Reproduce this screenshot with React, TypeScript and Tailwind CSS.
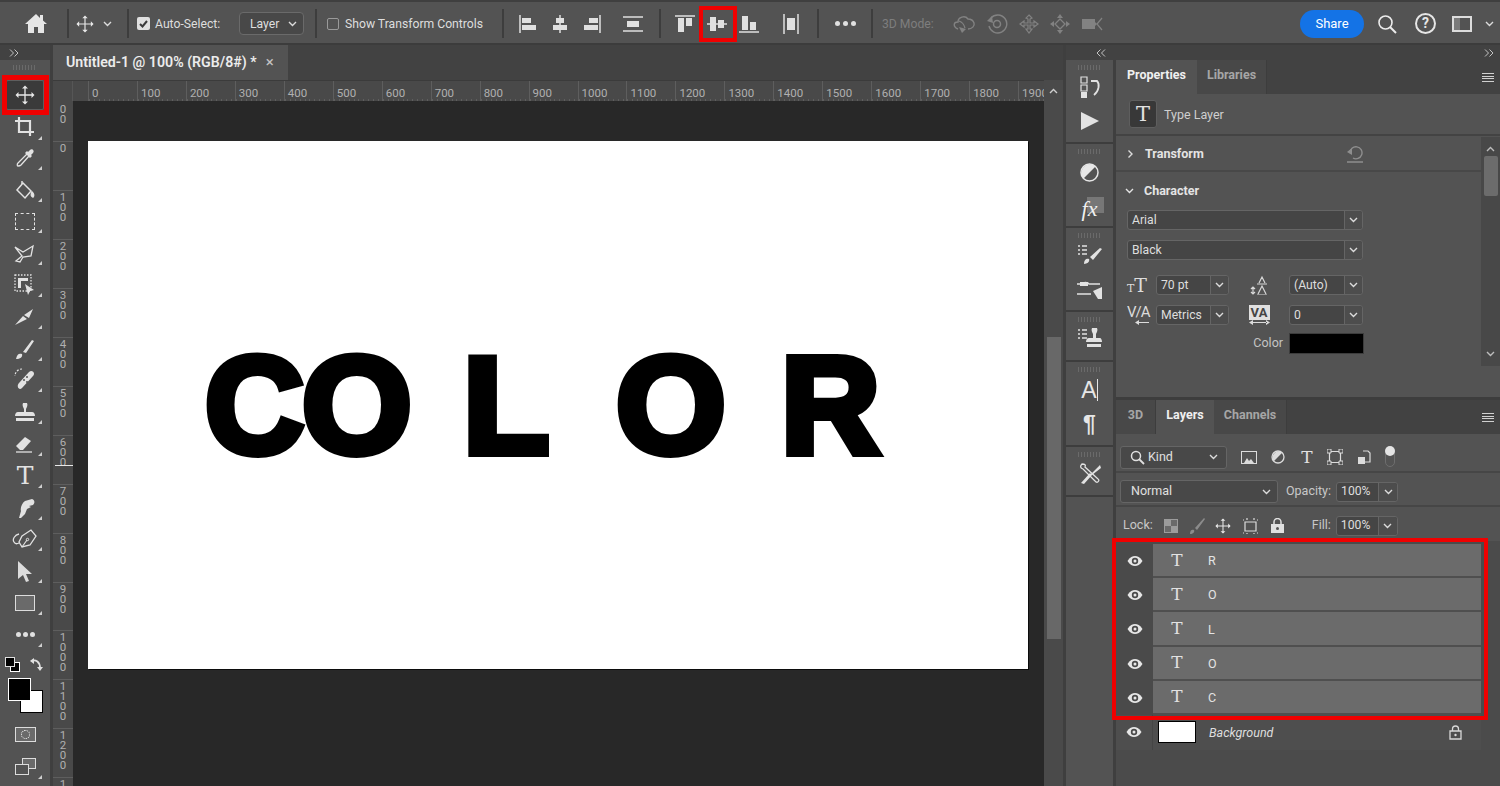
import React from 'react';

const Ico = ({ w = 20, h = 20, vb, children, className = 'text-[#e2e2e2]' }: { w?: number; h?: number; vb?: string; children: React.ReactNode; className?: string }) => (
  <svg width={w} height={h} viewBox={vb ?? `0 0 ${w} ${h}`} fill="none" stroke="currentColor" strokeWidth="1.5" className={className}>
    {children}
  </svg>
);

const Chevron = ({ className = 'text-[#dcdcdc]' }: { className?: string }) => (
  <svg width="9" height="6" viewBox="0 0 9 6" fill="none" stroke="currentColor" strokeWidth="1.4" className={className}>
    <path d="M1 1l3.5 3.5L8 1" />
  </svg>
);

const DoubleChevron = ({ className = '' }: { className?: string }) => (
  <svg width="10" height="8" viewBox="0 0 10 8" fill="none" stroke="#c4c4c4" strokeWidth="1" className={className}>
    <path d="M1 .5L4.500 4 1 7.500M5.500 .5L9 4 5.500 7.500" />
  </svg>
);

const MoveIcon = ({ s = 20 }: { s?: number }) => (
  <Ico w={s} h={s} vb="0 0 20 20" className="text-[#e8e8e8]">
    <path d="M10 2v16M2 10h16" strokeWidth="1.3" />
    <path d="M10 .5l3 3H7zM10 19.500l3-3H7zM.5 10l3-3v6zM19.500 10l-3-3v6z" fill="currentColor" stroke="none" />
  </Ico>
);

const TIcon = ({ size = 'text-[21px]' }: { size?: string }) => (
  <span className={`font-['DejaVu_Serif',serif] ${size} leading-none text-[#e2e2e2]`}>T</span>
);

const Eye = () => (
  <svg width="16" height="12" viewBox="0 0 16 12" className="text-[#e6e6e6]">
    <path d="M.5 6C3 2 5.500 1 8 1s5 1 7.500 5C13 10 10.500 11 8 11S3 10 .5 6z" fill="currentColor" />
    <circle cx="8" cy="6" r="3.200" fill="#4a4a4a" />
    <circle cx="8" cy="6" r="1.500" fill="currentColor" />
  </svg>
);

const Sep = () => <div className="w-[2px] h-[29px] bg-[#3d3d3d]" />;

const Grip = () => (
  <div className="h-[15px] shrink-0 flex items-center justify-center">
    <div className="w-[24px] h-[5px] bg-[repeating-linear-gradient(90deg,#6a6a6a_0_1px,transparent_1px_3px)]" />
  </div>
);

const AlignIcon = ({ children }: { children: React.ReactNode }) => (
  <Ico w={20} h={20} className="text-[#e0e0e0]">{children}</Ico>
);

const TopBar = () => (
  <div className="h-[45px] shrink-0 flex items-center bg-[#535353] border-t-2 border-b-2 pt-[2px] border-t-[#3f3f3f] border-b-[#3c3c3c] text-[12.200px] text-[#dedede]">
    <div className="w-[67px] pl-[25px] flex items-center">
      <svg width="22" height="19" viewBox="0 0 22 19" className="text-[#e6e6e6]">
        <path d="M11 0L0 10h3v9h6v-6h4v6h6v-9h3l-4-3.600V1h-3v3z" fill="currentColor" />
      </svg>
    </div>
    <Sep />
    <div className="w-[58px] flex items-center pl-[7px] gap-[9px]">
      <MoveIcon s={18} />
      <Chevron />
    </div>
    <Sep />
    <div className="ml-[8px] w-[13px] h-[13px] rounded-[2px] bg-[#e0e0e0] flex items-center justify-center">
      <svg width="9" height="8" viewBox="0 0 9 8" fill="none" stroke="#3a3a3a" strokeWidth="2"><path d="M1 4l2.500 2.500L8 1" /></svg>
    </div>
    <span className="ml-[5px] w-[84px] pt-[2px]">Auto-Select:</span>
    <div className="w-[65px] h-[23px] rounded-[4px] border border-[#6a6a6a] bg-[#484848] flex items-center justify-between pl-[10px] pr-[6px]">
      <span className="pt-[2px]">Layer</span>
      <Chevron />
    </div>
    <div className="ml-[11px]"><Sep /></div>
    <div className="ml-[10px] w-[12px] h-[12px] rounded-[2px] border border-[#9a9a9a]" />
    <span className="ml-[6px] w-[157px] pt-[2px]">Show Transform Controls</span>
    <Sep />
    <div className="ml-[8px] flex items-center">
      <div className="w-[32px] flex justify-center"><AlignIcon><path d="M2 1v18" /><path d="M4 4h9v5H4zM4 11h14v5H4z" fill="currentColor" stroke="none" /></AlignIcon></div>
      <div className="w-[32px] flex justify-center"><AlignIcon><path d="M10 1v18" /><path d="M6 4h8v5H6zM3 11h14v5H3z" fill="currentColor" stroke="none" /></AlignIcon></div>
      <div className="w-[32px] flex justify-center"><AlignIcon><path d="M18 1v18" /><path d="M7 4h9v5H7zM2 11h14v5H2z" fill="currentColor" stroke="none" /></AlignIcon></div>
      <div className="w-[50px] flex justify-center"><AlignIcon><path d="M0 3h20M0 17h20" /><path d="M4 7h12v6H4z" fill="currentColor" stroke="none" /></AlignIcon></div>
    </div>
    <div className="ml-[1px]"><Sep /></div>
    <div className="ml-[8px] flex items-center">
      <div className="w-[32px] flex justify-center"><AlignIcon><path d="M0 2h20" /><path d="M3 4h6v14H3zM11 4h6v8h-6z" fill="currentColor" stroke="none" /></AlignIcon></div>
      <div className="relative w-[32px] flex justify-center">
        <AlignIcon><path d="M0 10h20" /><path d="M3 3h6v14H3zM11 6h6v8h-6z" fill="currentColor" stroke="none" /></AlignIcon>
        <div className="absolute left-[-2px] top-[-8px] w-[38px] h-[36px] border-[4px] border-[#f00000]" />
      </div>
      <div className="w-[32px] flex justify-center"><AlignIcon><path d="M0 18h20" /><path d="M3 2h6v14H3zM11 8h6v8h-6z" fill="currentColor" stroke="none" /></AlignIcon></div>
      <div className="w-[52px] flex justify-center"><AlignIcon><path d="M3 0v20M17 0v20" /><path d="M6 4h8v12H6z" fill="currentColor" stroke="none" /></AlignIcon></div>
    </div>
    <Sep />
    <div className="w-[52px] flex justify-center gap-[3px]">
      <i className="w-[5px] h-[5px] rounded-full bg-[#e0e0e0]" />
      <i className="w-[5px] h-[5px] rounded-full bg-[#e0e0e0]" />
      <i className="w-[5px] h-[5px] rounded-full bg-[#e0e0e0]" />
    </div>
    <Sep />
    <span className="ml-[9px] w-[65px] pt-[2px] text-[#7e7e7e]">3D Mode:</span>
    <div className="flex items-center text-[#828282]">
      <div className="w-[34px] flex justify-center"><Ico w={24} h={20} className=""><path d="M6 15C1 13 1 8 6 8c0-5 7-7 10-3 2 0 5 1 6 4 1 3-2 6-6 6" strokeWidth="1.400" /><path d="M7 7c3 1 5 3 6 7" strokeWidth="1.200" /><path d="M7 13l7 2-4 4z" fill="currentColor" stroke="none" /></Ico></div>
      <div className="w-[32px] flex justify-center"><Ico w={22} h={22} className=""><path d="M5 5a9 9 0 1 1-2 8" strokeWidth="1.400" /><path d="M1 8l5-5 1 7z" fill="currentColor" stroke="none" /><circle cx="11" cy="11" r="3.500" /></Ico></div>
      <div className="w-[31px] flex justify-center"><Ico w={20} h={20} className=""><path d="M10 1l3 3-2 1v4h4V7l4 3-4 3v-2h-4v4h2l-3 4-3-4h2v-4H5v2l-4-3 4-3v2h4V5L7 4z" strokeWidth="1.200" /></Ico></div>
      <div className="w-[32px] flex justify-center"><Ico w={22} h={20} className=""><path d="M11 5l5 5-5 5-5-5z" strokeWidth="1.300" /><path d="M11 0l3 4H8zM11 20l3-4H8zM1 10l4-3v6zM21 10l-4-3v6z" fill="currentColor" stroke="none" /></Ico></div>
      <div className="w-[34px] flex justify-center"><Ico w={24} h={18} className=""><path d="M1 4h13v10H1z" fill="currentColor" stroke="none" /><path d="M21 3l-5 6 5 6" strokeWidth="1.200" /><path d="M16 9l-2-2v4z" fill="currentColor" stroke="none" /></Ico></div>
    </div>
    <div className="ml-[190px] w-[64px] h-[28px] rounded-full bg-[#1473e6] flex items-center justify-center text-white text-[13px]">Share</div>
    <div className="ml-[13px] w-[20px]"><Ico w={20} h={20} className="text-[#ececec]"><circle cx="8.500" cy="8.500" r="6.500" strokeWidth="1.600" /><path d="M13 13l6 6" strokeWidth="2" /></Ico></div>
    <div className="ml-[18px] w-[22px]"><div className="w-[21px] h-[21px] rounded-full border-2 border-[#e6e6e6] flex items-center justify-center text-[14px] font-bold text-[#e6e6e6]">?</div></div>
    <div className="ml-[15px] w-[20px] h-[16px] border-2 border-[#dcdcdc] flex items-center"><div className="w-[6px] h-full bg-[#7a7a7a]" /></div>
    <div className="ml-[13px]"><Chevron /></div>
  </div>
);

const Tool = ({ children, corner = true, h = 'h-[31.800px]' }: { children: React.ReactNode; corner?: boolean; h?: string }) => (
  <div className={`relative ${h} shrink-0 flex items-center justify-center`}>
    {children}
    {corner && <i className="absolute right-[8px] bottom-[4px] w-0 h-0 border-l-[4px] border-l-transparent border-b-[4px] border-b-[#cfcfcf]" />}
  </div>
);

const LeftTools = () => (
  <div className="w-[50px] shrink-0 bg-[#535353] flex flex-col border-r-[3px] border-r-[#3f3f3f] box-content">
    <div className="h-[15px] shrink-0 bg-[#424242] flex items-center pl-[9px]"><DoubleChevron /></div>
    <Grip />
    <div className="relative h-[40px] shrink-0 flex items-start justify-center pt-[5px]">
      <div className="w-[38px] h-[30px] bg-[#3a3a3a] rounded-[2px] border border-[#5e5e5e] flex items-center justify-center"><MoveIcon s={20} /></div>
      <div className="absolute left-[2px] top-0 w-[47px] h-[40px] border-[5px] border-[#f00000]" />
    </div>
    <div className="relative h-[27px] shrink-0 flex items-center justify-center pb-[3px]">
      <Ico w={22} h={22}><path d="M1 5h15v15M5 1v15h15" strokeWidth="2.200" /></Ico>
      <i className="absolute right-[8px] bottom-[2px] w-0 h-0 border-l-[4px] border-l-transparent border-b-[4px] border-b-[#cfcfcf]" />
    </div>
    <Tool><Ico w={20} h={20}><path d="M12 6L3 15c-1 1-1 3 0 3s2 0 3-1l8-9" strokeWidth="1.300" /><path d="M10 5l5 5 2-2-1-1 2-2c2-2-1-5-3-3l-2 2-1-1z" fill="currentColor" stroke="none" /></Ico></Tool>
    <Tool><Ico w={22} h={22}><path d="M9 4l8 8-6 7-8-8z" strokeWidth="1.500" /><path d="M8 5V2M18 13c2 2 2 4 1 5-2-1-2-3-1-5z" fill="currentColor" /></Ico></Tool>
    <Tool><div className="w-[20px] h-[17px] border-[1.500px] border-dashed border-[#e2e2e2]" /></Tool>
    <Tool><Ico w={22} h={20}><path d="M1 4l8 5 10-6-2 10-8 1-3 5-4-1 6-5z" strokeWidth="1.300" /></Ico></Tool>
    <Tool><Ico w={22} h={22}><path d="M1 1h16v16H1z" strokeDasharray="1.500 1.500" strokeWidth="1.300" /><path d="M4 4h10v3H7v7H4z" fill="currentColor" stroke="none" /><path d="M11 10l9 6-4 1-2 4z" fill="currentColor" stroke="none" /></Ico></Tool>
    <Tool><Ico w={22} h={20}><path d="M1 18l8-9 4 3zM10 8l9-6-4 9z" fill="currentColor" stroke="none" /></Ico></Tool>
    <Tool><Ico w={20} h={22}><path d="M1 21c1-5 3-6 6-5 1 3-2 5-6 5zM8 14l9-12 2 1-8 12z" fill="currentColor" stroke="none" /></Ico></Tool>
    <Tool>
      <Ico w={24} h={24}>
        <path d="M9 1a7 7 0 0 0-7 7" strokeDasharray="2 1.500" strokeWidth="1.200" />
        <path d="M6 15L16 4c3-3 7 1 4 4L9 20c-3 3-6-2-3-5z" fill="currentColor" stroke="none" />
        <circle cx="11" cy="12" r="1" fill="#535353" stroke="none" />
        <circle cx="14" cy="9" r="1" fill="#535353" stroke="none" />
        <circle cx="14" cy="14" r="1" fill="#535353" stroke="none" />
      </Ico>
    </Tool>
    <Tool><Ico w={22} h={22}><path d="M9 2h4c1 2 0 4-1 6v3h6c2 0 3 2 3 4H1c0-2 1-4 3-4h6V8C9 6 8 4 9 2zM2 17h18v3H2z" fill="currentColor" stroke="none" /></Ico></Tool>
    <Tool><Ico w={22} h={20}><path d="M2 12l9-9 6 4-8 9H6z" fill="currentColor" stroke="none" /><path d="M2 18h16" strokeWidth="1.300" /></Ico></Tool>
    <Tool><TIcon size="text-[25px]" /></Tool>
    <Tool><Ico w={20} h={22}><path d="M4 21l2-7c-1-3 1-8 4-10l7-2c3 1 3 4 1 6l-4 1 2 1-4 2-2 5-4 4z" fill="currentColor" stroke="none" /></Ico></Tool>
    <Tool>
      <Ico w={26} h={20}>
        <path d="M10 7L19 1l5 6-6 9-8 2-3-5z" strokeWidth="1.300" />
        <path d="M10 18l5-7" strokeWidth="1.200" />
        <circle cx="15.500" cy="10.500" r="1.200" strokeWidth="1" />
        <path d="M7 5C3 6 0 10 2 13c1 2 3 2 5 1" strokeWidth="1.300" />
      </Ico>
    </Tool>
    <Tool><svg width="14" height="21" viewBox="0 0 14 21" className="text-[#dcdcdc]"><path d="M0 0l14 13H8l3 7-3 1-3-7-5 4z" fill="currentColor" /></svg></Tool>
    <Tool><div className="w-[20px] h-[16px] bg-[#6a6a6a] border-[1.500px] border-[#dcdcdc]" /></Tool>
    <Tool>
      <div className="flex gap-[2px]">
        <i className="w-[5px] h-[5px] rounded-full bg-[#e0e0e0]" />
        <i className="w-[5px] h-[5px] rounded-full bg-[#e0e0e0]" />
        <i className="w-[5px] h-[5px] rounded-full bg-[#e0e0e0]" />
      </div>
    </Tool>
    <div className="h-[28px] shrink-0 flex items-center justify-between pl-[5px] pr-[6px]">
      <div className="relative w-[15px] h-[15px]">
        <div className="absolute right-0 bottom-0 w-[10px] h-[10px] bg-black border border-white" />
        <div className="absolute left-0 top-0 w-[10px] h-[10px] bg-black border border-[#dddddd]" />
      </div>
      <Ico w={14} h={14} className="text-[#e0e0e0]"><path d="M1 3c5-2 9 1 9 7" strokeWidth="1.800" /><path d="M7 9h6l-3 4zM4 0v6L0 3z" fill="currentColor" stroke="none" /></Ico>
    </div>
    <div className="relative h-[37px] shrink-0">
      <div className="absolute left-[20px] top-[11px] w-[23px] h-[23px] bg-white border border-black" />
      <div className="absolute left-[8px] top-[-1px] w-[23px] h-[23px] bg-black border border-white" />
    </div>
    <div className="h-[35px] shrink-0 flex items-center justify-center pt-[3px]">
      <div className="w-[21px] h-[15px] border-[1.500px] border-[#dcdcdc] bg-[#6a6a6a] flex items-center justify-center"><div className="w-[9px] h-[9px] rounded-full border border-dotted border-white" /></div>
    </div>
    <Tool>
      <div className="relative w-[21px] h-[17px]">
        <div className="absolute right-0 top-0 w-[14px] h-[11px] border-[1.500px] border-[#dcdcdc] bg-[#6a6a6a]" />
        <div className="absolute left-0 bottom-0 w-[14px] h-[11px] border-[1.500px] border-[#dcdcdc] bg-[#535353]" />
      </div>
    </Tool>
  </div>
);

const hLabels = ['0', '100', '200', '300', '400', '500', '600', '700', '800', '900', '1000', '1100', '1200', '1300', '1400', '1500', '1600', '1700', '1800', '1900'];
const vLabels = ['100', '0', '100', '200', '300', '400', '500', '600', '700', '800', '900', '1000', '1100', '1200', '1300'];

const Ruler = () => (
  <div className="h-[21px] shrink-0 flex bg-[#494949] border-t border-t-[#3b3b3b] overflow-hidden text-[11.500px] leading-[24px] text-[#b0b0b0]">
    <div className="w-[20px] shrink-0 border-r border-r-[#565656]" />
    <div className="w-[15px] shrink-0" />
    {hLabels.map((l, i) => (
      <div key={i} className="w-[48.960px] shrink-0 pl-[3px] border-l border-l-[#5e5e5e] bg-[repeating-linear-gradient(90deg,#5e5e5e_0_1px,transparent_1px_4.900px)] bg-[length:100%_2px] bg-bottom bg-no-repeat">{l}</div>
    ))}
  </div>
);

const VRuler = () => (
  <div className="w-[20px] shrink-0 bg-[#494949] overflow-hidden text-[11.500px] leading-[10px] text-[#b0b0b0]">
    <div className="mt-[-9px]">
      {vLabels.map((l, i) => (
        <div key={i} className="relative h-[48.960px] shrink-0 pt-[1px] border-t border-t-[#5e5e5e] flex flex-col items-center">
          {(i === 0 ? l.slice(1) : l).split('').map((c, k) => <span key={k} className={i === 0 ? 'relative top-[10px]' : ''}>{c}</span>)}
          {i === 7 && <i className="absolute left-[2px] right-0 top-[29px] h-[1px] bg-[#e8e8e8]" />}
        </div>
      ))}
    </div>
  </div>
);

const Letter = ({ ch, className }: { ch: string; className: string }) => (
  <span className={`absolute top-[180px] font-['Liberation_Sans',sans-serif] font-bold text-[137px] leading-[170px] text-black [-webkit-text-stroke:8px_black] ${className}`}>{ch}</span>
);

const Document = () => (
  <div className="flex-1 min-w-0 flex flex-col">
    <div className="h-[35px] bg-[#424242] flex shrink-0">
      <div className="w-[235px] bg-[#535353] flex items-center pl-[13px] text-[14.200px] font-semibold text-[#ececec]">
        <span>Untitled-1 @ 100% (RGB/8#) *</span>
        <span className="ml-[9px] text-[#c4c4c4] text-[15px] font-normal leading-none">×</span>
      </div>
    </div>
    <div className="flex flex-1 min-h-0">
      <div className="flex-1 min-w-0 flex flex-col">
        <Ruler />
        <div className="flex flex-1 min-h-0">
          <VRuler />
          <div className="flex-1 bg-[#282828] pt-[40px] pl-[15px]">
            <div className="relative w-[940px] h-[528px] bg-white shadow-[1px_1px_0_#0c0c0c]">
              <Letter ch="C" className="left-[117px]" />
              <Letter ch="O" className="left-[214px] origin-left scale-x-[1.03]" />
              <Letter ch="L" className="left-[375px] origin-left scale-x-[1.03]" />
              <Letter ch="O" className="left-[528px] origin-left scale-x-[1.03]" />
              <Letter ch="R" className="left-[693px]" />
            </div>
          </div>
        </div>
      </div>
      <div className="w-[19px] shrink-0 bg-[#4a4a4a] flex flex-col items-center">
        <div className="h-[22px] flex items-center"><Chevron className="text-[#cfcfcf] rotate-180" /></div>
        <div className="mt-[235px] w-[14px] h-[302px] bg-[#686868]" />
      </div>
    </div>
  </div>
);

const StripGroup = ({ children, h }: { children: React.ReactNode; h: string }) => (
  <div className={`${h} shrink-0 border-b-2 border-b-[#3d3d3d] flex flex-col items-center`}>{children}</div>
);

const IconStrip = () => (
  <div className="w-[47px] shrink-0 flex flex-col bg-[#535353] border-r-[3px] border-r-[#3f3f3f] box-content">
    <StripGroup h="h-[84px]">
      <Grip />
      <div className="h-[24px] flex items-center">
        <Ico w={22} h={22}><path d="M2 1h6v6H2zM2 9h6v6H2z" strokeWidth="1.200" /><path d="M2 16h6v6H2z" fill="currentColor" stroke="none" /><path d="M12 5h6c3 3 2 10-3 14" strokeWidth="1.800" /></Ico>
      </div>
      <div className="h-[43px] flex items-center">
        <svg width="18" height="18" viewBox="0 0 18 18" className="text-[#e2e2e2]"><path d="M0 0l18 9-18 9z" fill="currentColor" /></svg>
      </div>
    </StripGroup>
    <StripGroup h="h-[84px]">
      <Grip />
      <div className="h-[26px] flex items-center">
        <svg width="19" height="19" viewBox="0 0 19 19"><circle cx="9.500" cy="9.500" r="8.500" fill="none" stroke="#e6e6e6" strokeWidth="1.500" /><path d="M3.500 15.500A8.500 8.500 0 0 1 15.500 3.500z" fill="#e6e6e6" /></svg>
      </div>
      <div className="relative h-[41px] pt-[7px] w-full flex items-center justify-center">
        <div className="absolute left-[21px] top-[12px] w-[17px] h-[16px] bg-[#777777]" />
        <span className="relative font-['Liberation_Serif',serif] italic text-[22px] leading-none text-[#f0f0f0]">fx</span>
      </div>
    </StripGroup>
    <StripGroup h="h-[84px]">
      <Grip />
      <div className="h-[22px] flex items-center">
        <Ico w={26} h={22}><path d="M1 3h2M1 7h2M1 11h2M5 3h5M5 7h5M5 11h5" strokeWidth="1.300" /><path d="M7 21c0-4 2-6 5-5 1 2-1 5-5 5zM13 14l10-9 2 1-9 11z" fill="currentColor" stroke="none" /></Ico>
      </div>
      <div className="h-[45px] pt-[5px] flex items-center">
        <Ico w={26} h={22}><path d="M0 5h5c1-2 6-2 7 0h11M0 15h14" strokeWidth="1.600" /><path d="M3 3h8v4H3zM16 12l9-4v12l-4 0z" fill="currentColor" stroke="none" /></Ico>
      </div>
    </StripGroup>
    <StripGroup h="h-[50px]">
      <Grip />
      <div className="h-[22px] flex items-center">
        <Ico w={26} h={22}><path d="M1 3h2M1 7h2M1 11h2M5 3h5M5 7h5M5 11h5" strokeWidth="1.300" /><path d="M15 1h5c1 2 0 4-1 6v4h4c1 0 2 2 2 4H9c0-2 1-4 3-4h4V7c-1-2-2-4-1-6zM10 17h14v3H10z" fill="currentColor" stroke="none" /></Ico>
      </div>
    </StripGroup>
    <StripGroup h="h-[85px]">
      <Grip />
      <div className="h-[26px] flex items-center font-['Liberation_Sans',sans-serif] text-[23px] leading-none text-[#e6e6e6] font-light">A<i className="w-[1px] h-[22px] bg-[#e6e6e6]" /></div>
      <div className="h-[42px] flex items-center font-['Liberation_Sans',sans-serif] text-[23px] font-bold leading-none text-[#e6e6e6]">¶</div>
    </StripGroup>
    <StripGroup h="h-[50px]">
      <Grip />
      <div className="h-[24px] flex items-center">
        <Ico w={24} h={22}><path d="M4 1c-2 2-2 4 1 5l13 13c2 1 4-2 2-3L7 4c1-2 0-3-3-3z" strokeWidth="1.300" /><path d="M3 20l3 1 8-9-2-2zM22 2l-9 9 1 1 9-7z" fill="currentColor" stroke="none" /></Ico>
      </div>
    </StripGroup>
  </div>
);

const Field = ({ w, divider = 18, text }: { w: string; divider?: number; text: string }) => (
  <div className={`${w} h-[20px] rounded-[3px] border border-[#656565] bg-[#454545] flex items-center text-[12.200px] text-[#dedede]`}>
    <span className="flex-1 pl-[4px] truncate">{text}</span>
    <div className="h-full flex items-center justify-center border-l border-l-[#656565] bg-[#4d4d4d] rounded-r-[3px]" style={{ width: divider }}><Chevron /></div>
  </div>
);

const PanelTabs = ({ tabs }: { tabs: { label: string; w: string; active?: boolean }[] }) => (
  <div className="h-[34px] shrink-0 flex bg-[#424242] relative text-[12.500px] font-bold">
    {tabs.map(t => (
      <div key={t.label} className={`${t.w} flex items-center justify-center pb-[4px] ${t.active ? 'bg-[#535353] text-[#f0f0f0]' : 'bg-[#484848] text-[#a6a6a6] border-r border-r-[#3d3d3d]'}`}>{t.label}</div>
    ))}
    <div className="ml-auto mr-[6px] self-center w-[12px] h-[9px] bg-[repeating-linear-gradient(180deg,#d0d0d0_0_1px,transparent_1px_2.500px)]" />
  </div>
);

const PropertiesPanel = () => (
  <div className="h-[340px] shrink-0 flex flex-col bg-[#535353] border-b-[3px] border-b-[#3d3d3d]">
    <PanelTabs tabs={[{ label: 'Properties', w: 'w-[81px]', active: true }, { label: 'Libraries', w: 'w-[70px]' }]} />
    <div className="h-[42px] shrink-0 flex items-center pl-[13px] border-b-2 border-b-[#434343] text-[12.500px] text-[#cfcfcf]">
      <div className="w-[28px] h-[28px] bg-[#383838] border border-[#5e5e5e] rounded-[3px] flex items-center justify-center"><TIcon /></div>
      <span className="ml-[7px] pt-[3px]">Type Layer</span>
    </div>
    <div className="flex flex-1 min-h-0">
      <div className="flex-1 min-w-0">
        <div className="h-[36px] flex items-center border-b-2 border-b-[#484848] pt-[2px] pl-[10px] pr-[117px] text-[12.500px] font-bold text-[#e4e4e4]">
          <Chevron className="text-[#dcdcdc] -rotate-90" />
          <span className="ml-[10px]">Transform</span>
          <div className="ml-auto"><Ico w={18} h={17} className="text-[#8e8e8e]"><path d="M4 7a6 6 0 1 1 3 5M1 16h16" strokeWidth="1.400" /><path d="M1 6l5-4v7z" fill="currentColor" stroke="none" /></Ico></div>
        </div>
        <div className="pl-[11px]">
          <div className="h-[38px] flex items-center text-[12.500px] font-bold text-[#e4e4e4]">
            <Chevron className="-ml-[2px]" />
            <span className="ml-[10px]">Character</span>
          </div>
          <Field w="w-[236px]" text="Arial" />
          <div className="mt-[10px]"><Field w="w-[236px]" text="Black" /></div>
          <div className="mt-[15px] flex items-center">
            <span className="w-[29px] text-[#dcdcdc] font-['DejaVu_Serif',serif] text-[19px] leading-none"><small className="text-[11px]">T</small>T</span>
            <Field w="w-[73px]" text="70 pt" />
            <div className="w-[60px] flex justify-center"><Ico w={20} h={20} className="text-[#d8d8d8]"><path d="M4 12V19M2 14l2-2 2 2M2 17l2 2 2-2M10 8l3-6 3 6M9 19l4-8 4 8" strokeWidth="1.200" /><path d="M8 9h10M8 20h10" strokeWidth="1" /></Ico></div>
            <Field w="w-[74px]" text="(Auto)" />
          </div>
          <div className="mt-[10px] flex items-center">
            <div className="w-[29px] flex flex-col items-start text-[#dcdcdc]">
              <span className="text-[15px] leading-[15px] tracking-[-1px]">V/A</span>
              <svg width="14" height="5" viewBox="0 0 14 5" className="ml-[8px] text-[#dcdcdc]"><path d="M0 2.500l4-2.500v5zM3 2h11v1H3z" fill="currentColor" /></svg>
            </div>
            <Field w="w-[73px]" text="Metrics" />
            <div className="w-[60px] flex flex-col items-center">
              <div className="w-[21px] h-[15px] bg-[#e0e0e0] text-[#454545] text-[13px] font-bold leading-[15px] text-center">VA</div>
              <svg width="21" height="5" viewBox="0 0 21 5" className="text-[#dcdcdc]"><path d="M0 2.500l4-2.500v5zM21 2.500l-4-2.500v5zM3 2h15v1H3z" fill="currentColor" /></svg>
            </div>
            <Field w="w-[74px]" text="0" />
          </div>
          <div className="mt-[8px] flex items-center justify-end w-[237px] text-[12.500px] text-[#c4c4c4]">
            <span className="mr-[6px]">Color</span>
            <div className="w-[75px] h-[21px] bg-black border border-[#3c3c3c]" />
          </div>
        </div>
      </div>
      <div className="w-[19px] shrink-0 h-[229px] bg-[#484848] flex flex-col items-center pt-[9px] mt-[1px]">
        <Chevron className="text-[#bdbdbd] rotate-180" />
        <div className="mt-[4px] w-[14px] h-[40px] rounded-[2px] bg-[#6c6c6c]" />
        <div className="mt-auto mb-[9px]"><Chevron className="text-[#bdbdbd]" /></div>
      </div>
    </div>
  </div>
);

const LayerRow = ({ name }: { name: string }) => (
  <div className="h-[34.200px] flex pr-[19px]">
    <div className="w-[37px] shrink-0 bg-[#4a4a4a] flex items-center justify-center"><Eye /></div>
    <div className="flex-1 bg-[#6b6b6b] border-b-2 border-b-[#4f4f4f] flex items-center">
      <div className="w-[48px] flex justify-center"><TIcon size="text-[17px]" /></div>
      <span className="ml-[7px] pt-[3px] text-[12.500px] text-[#e4e4e4]">{name}</span>
    </div>
  </div>
);

const LayersPanel = () => (
  <div className="flex-1 min-h-0 flex flex-col bg-[#4b4b4b]">
    <PanelTabs tabs={[{ label: '3D', w: 'w-[40px]' }, { label: 'Layers', w: 'w-[58px]', active: true }, { label: 'Channels', w: 'w-[73px]' }]} />
    <div className="h-[39px] shrink-0 flex items-center pl-[4px] pt-[9px] bg-[#535353] border-b-2 border-b-[#464646]">
      <div className="w-[107px] h-[23px] rounded-[3px] border border-[#656565] bg-[#484848] flex items-center pl-[9px] pr-[8px] text-[12.500px] text-[#e0e0e0]">
        <Ico w={15} h={15} className="text-[#e0e0e0]"><circle cx="6" cy="6" r="4.500" /><path d="M9 9l5 5" strokeWidth="1.800" /></Ico>
        <span className="ml-[3px]">Kind</span>
        <div className="ml-auto"><Chevron /></div>
      </div>
      <div className="ml-[14px] w-[16px] h-[13px] border border-[#dcdcdc] flex items-end"><svg width="14" height="9" viewBox="0 0 14 9" className="text-[#dcdcdc]"><path d="M2 9l3-5 2 3 2-2 3 4z" fill="currentColor" /></svg></div>
      <div className="ml-[14px]"><svg width="14" height="14" viewBox="0 0 14 14"><circle cx="7" cy="7" r="6" fill="none" stroke="#dcdcdc" strokeWidth="1.300" /><path d="M2.800 11.200A6 6 0 0 1 11.200 2.800z" fill="#dcdcdc" /></svg></div>
      <div className="ml-[14px] w-[16px] flex justify-center"><TIcon size="text-[17px]" /></div>
      <div className="ml-[12px]"><Ico w={16} h={16} className="text-[#dcdcdc]"><path d="M2.500 2.500h11v11h-11z" strokeWidth="1.200" /><path d="M0 0h4v4H0zM12 0h4v4h-4zM0 12h4v4H0zM12 12h4v4h-4z" fill="#535353" strokeWidth="1" /></Ico></div>
      <div className="ml-[14px]"><Ico w={14} h={15} className="text-[#dcdcdc]"><path d="M6 1h5l2 2v9H8" strokeWidth="1.200" /><path d="M1 7h7v7H1z" fill="currentColor" stroke="none" /></Ico></div>
      <div className="ml-[14px] relative w-[10px] h-[18px] rounded-full border border-[#6e6e6e] self-center mt-[2px]">
        <div className="absolute left-[-1px] top-[-4px] w-[10px] h-[10px] rounded-full bg-[#e4e4e4]" />
      </div>
    </div>
    <div className="h-[34px] shrink-0 flex items-center pl-[4px] pt-[5px] bg-[#535353] border-b-2 border-b-[#464646] text-[12.500px] text-[#c8c8c8]">
      <div className="w-[158px] h-[23px] rounded-[3px] border border-[#656565] bg-[#484848] flex items-center justify-between pl-[10px] pr-[6px] text-[#e0e0e0]">
        <span>Normal</span>
        <Chevron />
      </div>
      <span className="ml-[8px]">Opacity:</span>
      <div className="ml-[5px]"><Field w="w-[62px]" divider={19} text="100%" /></div>
    </div>
    <div className="h-[34px] shrink-0 flex items-center pl-[7px] pt-[3px] bg-[#535353] text-[12.500px] text-[#c8c8c8]">
      <span>Lock:</span>
      <div className="ml-[11px] grid grid-cols-2 w-[14px] h-[14px] border border-[#9c9c9c]">
        <i className="bg-[#9c9c9c]" /><i className="bg-[#6a6a6a]" /><i className="bg-[#6a6a6a]" /><i className="bg-[#9c9c9c]" />
      </div>
      <div className="ml-[12px]"><Ico w={16} h={16} className="text-[#8b8b8b]"><path d="M0 16c0-4 2-5 4-4 1 2-1 4-4 4zM5 10l9-10 1 1-8 11z" fill="currentColor" stroke="none" /></Ico></div>
      <div className="ml-[9px]"><MoveIcon s={16} /></div>
      <div className="ml-[11px]"><Ico w={17} h={16} className="text-[#dcdcdc]"><path d="M3 4h11v9H3z" strokeWidth="1.200" /><path d="M1 2h1M5 0v2M12 0v2M15 2h1M1 15h1M15 15h1M5 15v1M12 15v1" strokeWidth="1.200" /></Ico></div>
      <div className="ml-[12px]"><svg width="13" height="15" viewBox="0 0 13 15" className="text-[#e0e0e0]"><path d="M3 6V4a3.500 3.500 0 0 1 7 0v2" fill="none" stroke="currentColor" strokeWidth="1.500" /><path d="M0 6h13v9H0z" fill="currentColor" /><circle cx="6.500" cy="10.500" r="1.500" fill="#535353" /></svg></div>
      <span className="ml-[28px]">Fill:</span>
      <div className="ml-[5px]"><Field w="w-[62px]" divider={19} text="100%" /></div>
    </div>
    <div className="relative mt-[3px]">
      {['R', 'O', 'L', 'O', 'C'].map((n, i) => <LayerRow key={i} name={n} />)}
      <div className="absolute left-[-4px] top-[-6px] w-[376px] h-[182px] border-[4px] border-[#f00000]" />
    </div>
    <div className="h-[35px] flex mr-[19px] bg-[#4e4e4e]">
      <div className="w-[37px] shrink-0 flex items-center justify-center border-r border-r-[#454545]"><Eye /></div>
      <div className="flex-1 flex items-center">
        <div className="ml-[5px] w-[38px] h-[22px] bg-white border border-black" />
        <span className="ml-[13px] pt-[2px] text-[12.500px] italic text-[#dedede]">Background</span>
        <div className="ml-auto mr-[19px]"><svg width="13" height="15" viewBox="0 0 13 15" className="text-[#d8d8d8]"><path d="M3.500 6V4a3 3 0 0 1 6 0v2" fill="none" stroke="currentColor" strokeWidth="1.300" /><path d="M1 6h11v8H1z" fill="none" stroke="currentColor" strokeWidth="1.300" /><circle cx="6.500" cy="10" r="1.200" fill="currentColor" /></svg></div>
      </div>
    </div>
  </div>
);

export default function App() {
  return (
    <div className="w-[1500px] h-[786px] overflow-hidden flex flex-col bg-[#454545] font-['Roboto','Liberation_Sans',sans-serif]">
      <TopBar />
      <div className="flex flex-1 min-h-0">
        <LeftTools />
        <Document />
        <div className="w-[3px] shrink-0 bg-[#3f3f3f]" />
        <div className="w-[434px] shrink-0 flex flex-col">
          <div className="h-[15px] shrink-0 bg-[#424242] flex items-center justify-between pl-[30px] pr-[6px]">
            <DoubleChevron className="rotate-180" />
            <DoubleChevron />
          </div>
          <div className="flex flex-1 min-h-0">
            <IconStrip />
            <div className="flex-1 min-w-0 flex flex-col">
              <PropertiesPanel />
              <LayersPanel />
            </div>
          </div>
        </div>
      </div>
    </div>
  );
}
